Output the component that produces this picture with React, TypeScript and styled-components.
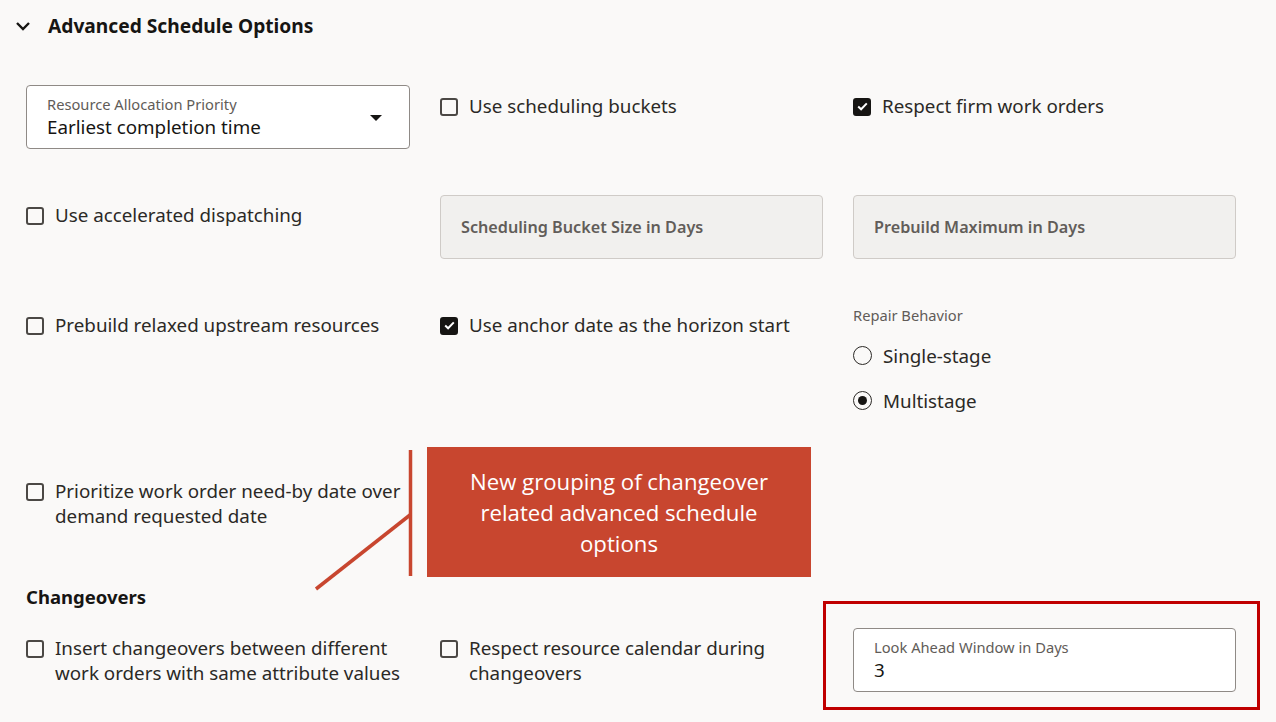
import React from "react";
import styled, { createGlobalStyle } from "styled-components";

const GlobalStyle = createGlobalStyle`
  html, body {
    margin: 0;
    padding: 0;
    background: #faf9f8;
  }
  body {
    font-family: "Noto Sans", "Open Sans", sans-serif;
    color: #2b2926;
  }
`;

const Page = styled.div`
  position: relative;
  width: 1276px;
  height: 722px;
  overflow: hidden;
  background: #faf9f8;
`;

const Header = styled.div`
  display: flex;
  align-items: center;
  height: 51px;
  padding-left: 14px;
  gap: 16px;
`;

const Title = styled.h2`
  margin: 0;
  font-size: 19.2px;
  font-weight: 700;
  color: #161513;
`;

const Body = styled.div`
  padding-left: 26px;
`;

const Row = styled.div<{ $top: number }>`
  display: grid;
  grid-template-columns: 384px 383px 383px;
  column-gap: 30px;
  align-items: start;
  margin-top: ${(p) => p.$top}px;
`;

const Field = styled.div<{ $readonly?: boolean }>`
  position: relative;
  box-sizing: border-box;
  height: 64px;
  border: 1px solid ${(p) => (p.$readonly ? "#cfcbc7" : "#8f8a86")};
  border-radius: 4px;
  background: ${(p) => (p.$readonly ? "#f1f0ee" : "#ffffff")};
  padding: 0 20px;
  display: flex;
  flex-direction: column;
  justify-content: center;
`;

const FieldLabel = styled.div`
  font-size: 14.7px;
  line-height: 20px;
  color: #615c58;
`;

const FieldValue = styled.div`
  font-size: 18.8px;
  line-height: 26px;
  color: #161513;
`;

const Placeholder = styled.div`
  font-size: 16.2px;
  font-weight: 600;
  color: #625d59;
`;

const Caret = styled.span`
  position: absolute;
  right: 27px;
  top: 29px;
  width: 0;
  height: 0;
  border-left: 6px solid transparent;
  border-right: 6px solid transparent;
  border-top: 6px solid #161513;
`;

const Check = styled.label<{ $pad: number }>`
  display: flex;
  align-items: flex-start;
  gap: 11px;
  padding-top: ${(p) => p.$pad}px;
  font-size: 18.8px;
  line-height: 25px;
  color: #2b2926;
`;

const Box = styled.span<{ $on?: boolean }>`
  flex: none;
  box-sizing: border-box;
  width: 18px;
  height: 18px;
  margin-top: 3.5px;
  border-radius: 3px;
  border: 2px solid ${(p) => (p.$on ? "#161513" : "#4b4845")};
  background: ${(p) => (p.$on ? "#161513" : "transparent")};
  display: flex;
  align-items: center;
  justify-content: center;
`;

const Group = styled.div`
  padding-top: 6px;
`;

const GroupLabel = styled.div`
  font-size: 14.7px;
  line-height: 18px;
  color: #615c58;
  margin-bottom: 9px;
`;

const Radio = styled.label`
  display: flex;
  align-items: center;
  gap: 11px;
  height: 45px;
  font-size: 18.8px;
  color: #2b2926;
`;

const Circle = styled.span<{ $on?: boolean }>`
  box-sizing: border-box;
  width: 19px;
  height: 19px;
  border-radius: 50%;
  border: 1.6px solid #2b2926;
  display: flex;
  align-items: center;
  justify-content: center;
  &::after {
    content: "";
    width: 9px;
    height: 9px;
    border-radius: 50%;
    background: #161513;
    display: ${(p) => (p.$on ? "block" : "none")};
  }
`;

const Section = styled.h3`
  margin: 56px 0 0;
  font-size: 18.5px;
  line-height: 24px;
  font-weight: 700;
  color: #161513;
`;

const Highlight = styled.div`
  position: relative;
  margin-top: 19px;
  &::before {
    content: "";
    position: absolute;
    left: -30px;
    right: -24px;
    top: -27px;
    bottom: -18px;
    border: 3px solid #c00000;
    pointer-events: none;
  }
`;

const Callout = styled.div`
  position: absolute;
  left: 427px;
  top: 447px;
  width: 384px;
  height: 130px;
  background: #c8462f;
  color: #ffffff;
  font-family: "Open Sans", "Noto Sans", sans-serif;
  font-size: 22.2px;
  line-height: 31px;
  text-align: center;
  display: flex;
  align-items: center;
  justify-content: center;
  padding: 0 30px;
  box-sizing: border-box;
`;

const Leader = styled.svg`
  position: absolute;
  left: 300px;
  top: 440px;
`;

function CheckMark() {
  return (
    <svg width="11" height="9" viewBox="0 0 11 9">
      <path d="M1.2 4.6 L4.1 7.3 L9.8 1.4" fill="none" stroke="#fff" strokeWidth="2" />
    </svg>
  );
}

function Option({ text, on, pad }: { text: React.ReactNode; on?: boolean; pad: number }) {
  return (
    <Check $pad={pad}>
      <Box $on={on}>{on && <CheckMark />}</Box>
      <span>{text}</span>
    </Check>
  );
}

export default function App() {
  return (
    <Page>
      <GlobalStyle />
      <Header>
        <svg width="18" height="18" viewBox="0 0 18 18">
          <path d="M3 6 L9 12 L15 6" fill="none" stroke="#161513" strokeWidth="2.4" />
        </svg>
        <Title>Advanced Schedule Options</Title>
      </Header>
      <Body>
        <Row $top={34}>
          <Field>
            <FieldLabel>Resource Allocation Priority</FieldLabel>
            <FieldValue>Earliest completion time</FieldValue>
            <Caret />
          </Field>
          <Option pad={9} text="Use scheduling buckets" />
          <Option pad={9} on text="Respect firm work orders" />
        </Row>
        <Row $top={46}>
          <Option pad={8} text="Use accelerated dispatching" />
          <Field $readonly>
            <Placeholder>Scheduling Bucket Size in Days</Placeholder>
          </Field>
          <Field $readonly>
            <Placeholder>Prebuild Maximum in Days</Placeholder>
          </Field>
        </Row>
        <Row $top={41}>
          <Option pad={13} text="Prebuild relaxed upstream resources" />
          <Option pad={13} on text="Use anchor date as the horizon start" />
          <Group>
            <GroupLabel>Repair Behavior</GroupLabel>
            <Radio>
              <Circle />
              Single-stage
            </Radio>
            <Radio>
              <Circle $on />
              Multistage
            </Radio>
          </Group>
        </Row>
        <Row $top={56}>
          <Option
            pad={0}
            text={
              <>
                Prioritize work order need-by date over
                <br />
                demand requested date
              </>
            }
          />
        </Row>
        <Section>Changeovers</Section>
        <Row $top={0}>
          <Option
            pad={27}
            text={
              <>
                Insert changeovers between different
                <br />
                work orders with same attribute values
              </>
            }
          />
          <Option
            pad={27}
            text={
              <>
                Respect resource calendar during
                <br />
                changeovers
              </>
            }
          />
          <Highlight>
            <Field>
              <FieldLabel>Look Ahead Window in Days</FieldLabel>
              <FieldValue>3</FieldValue>
            </Field>
          </Highlight>
        </Row>
      </Body>
      <Leader width="120" height="160" viewBox="0 0 120 160">
        <line x1="110.5" y1="10" x2="110.5" y2="136" stroke="#c8462f" strokeWidth="3.5" />
        <line x1="110" y1="75" x2="16" y2="149" stroke="#c8462f" strokeWidth="3.5" />
      </Leader>
      <Callout>New grouping of changeover related advanced schedule options</Callout>
    </Page>
  );
}
